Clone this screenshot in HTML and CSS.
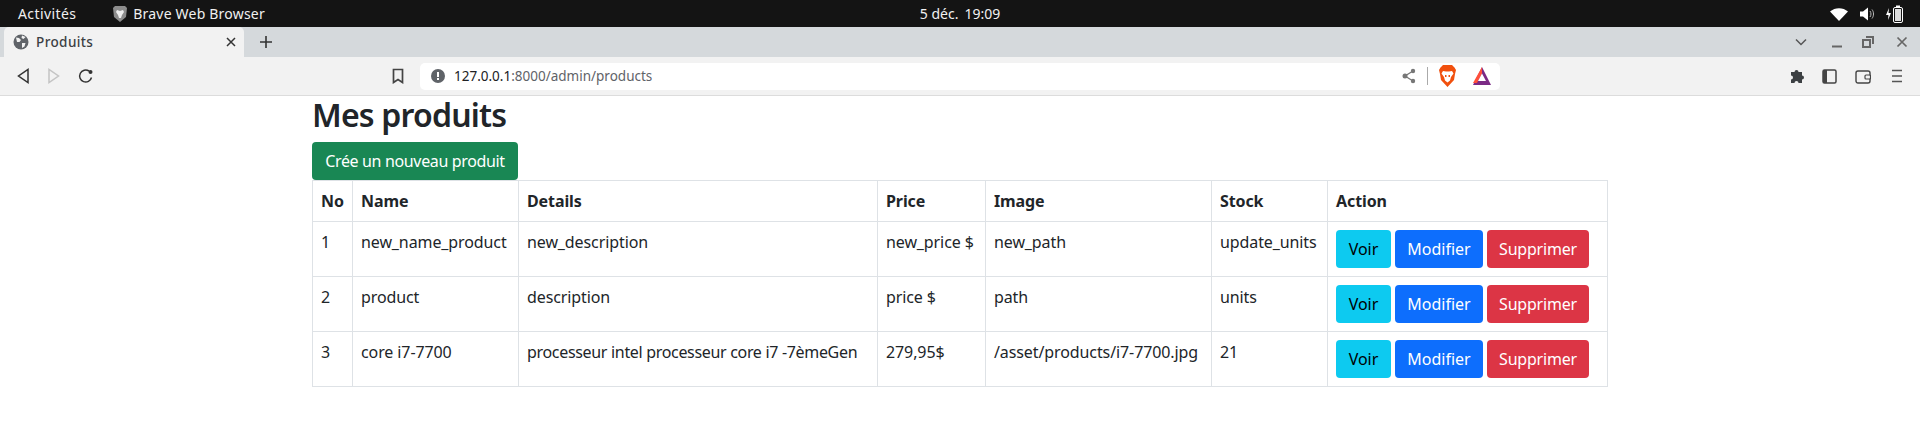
FILE: index.html
```html
<!DOCTYPE html>
<html lang="fr">
<head>
    <meta charset="UTF-8">
    <title>Produits</title>
    <link rel="stylesheet" href="styles.css">
</head>
<body>
    <!-- Desktop top bar -->
    <div class="topbar">
        <div class="topbar-left">
            <span class="activities">Activités</span>
            <svg class="app-icon" width="16" height="18" viewBox="0 0 16 18"><path d="M3 1h10l2 2-1 9-6 5-6-5-1-9z" fill="#8d8d8d"/><path d="M5 5l3 1 3-1 1 2-2 3-1 3H7l-1-3-2-3z" fill="#eee"/></svg>
            <span class="app-name">Brave Web Browser</span>
        </div>
        <div class="topbar-clock"><span>5 déc.</span><span>19:09</span></div>
        <div class="topbar-right">
            <svg width="20" height="16" viewBox="0 0 20 16"><path d="M1 5.500C6 1 14 1 19 5.500L10 15z" fill="#fff"/></svg>
            <svg width="16" height="16" viewBox="0 0 16 16"><path d="M1 5.500h3L9 1.500v13l-5-4H1z" fill="#fff"/><path d="M11 5c1.300 1.800 1.300 4.200 0 6M13 3.500c2 2.600 2 6.400 0 9" fill="none" stroke="#bbb"/></svg>
            <svg width="20" height="18" viewBox="0 0 20 18"><path d="M4 3L1 10h2.500L3 15l3-7H3.500z" fill="#fff"/><rect x="8.500" y="2.500" width="9" height="15" rx="1.500" fill="none" stroke="#fff"/><rect x="11" y="0.500" width="4" height="2" fill="#fff"/><rect x="10" y="4" width="6" height="12" fill="#ddd"/></svg>
        </div>
    </div>

    <!-- Browser tabs -->
    <div class="tabstrip">
        <div class="tab">
            <svg width="16" height="16" viewBox="0 0 16 16"><circle cx="8" cy="8" r="7.500" fill="#5f6368"/><path d="M3 3.500l3 .5 2 2-1.500 2L4 8zM9 1.500l3.500 1.500-2 2L8.500 4zM9 9h3.500l-1 3.500L9 14z" fill="#f2f2f2"/></svg>
            <span class="tab-title">Produits</span>
            <svg class="tab-close" width="10" height="10" viewBox="0 0 10 10"><path d="M1 1l8 8M9 1L1 9" stroke="#333" stroke-width="1.500"/></svg>
        </div>
        <svg class="new-tab" width="14" height="14" viewBox="0 0 14 14"><path d="M7 1v12M1 7h12" stroke="#333" stroke-width="1.600"/></svg>
        <div class="window-buttons">
            <svg width="12" height="8" viewBox="0 0 12 8"><path d="M1 1.500l5 5 5-5" fill="none" stroke="#555" stroke-width="1.500"/></svg>
            <svg class="win-min" width="12" height="12" viewBox="0 0 12 12"><path d="M1 10.500h10" stroke="#666" stroke-width="2"/></svg>
            <svg class="win-restore" width="12" height="12" viewBox="0 0 12 12"><path d="M1 4h7v7H1z" fill="none" stroke="#666" stroke-width="2"/><path d="M4 1h7v7" fill="none" stroke="#666" stroke-width="2"/></svg>
            <svg class="win-close" width="12" height="12" viewBox="0 0 12 12"><path d="M1.500 1.500l9 9M10.500 1.500l-9 9" stroke="#666" stroke-width="1.700"/></svg>
        </div>
    </div>

    <!-- Browser toolbar -->
    <div class="toolbar">
        <svg class="nav-back" width="12" height="16" viewBox="0 0 12 16"><path d="M11 1.500v13L1.500 8z" fill="none" stroke="#333" stroke-width="1.500"/></svg>
        <svg class="nav-forward" width="12" height="16" viewBox="0 0 12 16"><path d="M1 1.500v13L10.500 8z" fill="none" stroke="#c4c4c4" stroke-width="1.500"/></svg>
        <svg class="nav-reload" width="16" height="16" viewBox="0 0 16 16"><path d="M13.500 9.500A6 6 0 1 1 11 3" fill="none" stroke="#333" stroke-width="1.500"/><circle cx="12.500" cy="4" r="2" fill="#333"/></svg>
        <svg class="nav-bookmark" width="12" height="16" viewBox="0 0 12 16"><path d="M1.500 1.500h9v13L6 11.500l-4.500 3z" fill="none" stroke="#444" stroke-width="1.700"/></svg>
        <div class="urlbar">
            <svg width="14" height="14" viewBox="0 0 14 14"><circle cx="7" cy="7" r="7" fill="#5f6368"/><rect x="6" y="3" width="2" height="5" fill="#fff"/><rect x="6" y="9" width="2" height="2" fill="#fff"/></svg>
            <span class="url"><span class="url-host">127.0.0.1</span>:8000/admin/products</span>
            <svg class="url-share" width="14" height="16" viewBox="0 0 14 16"><path d="M11 3L3 8l8 5" fill="none" stroke="#777" stroke-width="1.300"/><circle cx="11" cy="3" r="2.200" fill="#777"/><circle cx="3" cy="8" r="2.500" fill="#777"/><circle cx="11" cy="13" r="2.200" fill="#777"/></svg>
            <span class="url-divider"></span>
            <svg class="url-brave" width="17" height="22" viewBox="0 0 17 22"><path d="M4 0h9l2.500 2.500L17 5l-1 4-1 6-6.500 7L2 15 1 9 0 5l1.500-2.500z" fill="#f1500e"/><path d="M4 6l3 .5h3l3-.5 1.500 2.500-2.500 3.500-1 3.500-2.500 2-2.500-2-1-3.500L2.500 8.500z" fill="#fff"/><path d="M6 10h1.500v2H6zM9.500 10H11v2H9.500z" fill="#f1500e"/></svg>
            <svg class="url-bat" width="18" height="18" viewBox="0 0 18 18"><path d="M9 0l9 18H0z" fill="#7b2a85"/><path d="M9 0L0 16h4L9 6.500z" fill="#ff4f3a"/><path d="M9 6.500l4 7.500H5z" fill="#fff"/></svg>
        </div>
        <svg class="tool-ext" width="15" height="16" viewBox="0 0 15 16"><path d="M1 4h3.500a2 2 0 0 1 4 0H12v3.500a2 2 0 0 1 0 4V15H8.500a2 2 0 0 0-4 0H1v-3.500a2 2 0 0 0 0-4z" fill="#3c4043"/></svg>
        <svg class="tool-side" width="15" height="15" viewBox="0 0 15 15"><rect x="1" y="1" width="13" height="13" rx="1.500" fill="none" stroke="#444" stroke-width="1.500"/><rect x="1" y="1" width="4" height="13" fill="#444"/></svg>
        <svg class="tool-wallet" width="16" height="15" viewBox="0 0 16 15"><rect x="1" y="2" width="14" height="12" rx="2" fill="none" stroke="#444" stroke-width="1.400"/><rect x="10" y="6" width="5.500" height="4" rx="1" fill="#f2f2f2" stroke="#444" stroke-width="1.200"/></svg>
        <svg class="tool-menu" width="12" height="14" viewBox="0 0 12 14"><path d="M1 1.500h10M1 7h10M1 12.500h10" stroke="#555" stroke-width="1.700"/></svg>
    </div>

    <!-- Page content -->
    <div class="container">
        <h2 class="page-title">Mes produits</h2>
        <a class="btn btn-success btn-create" href="#">Crée un nouveau produit</a>
        <table class="product-table">
            <colgroup>
                <col class="col-no"><col class="col-name"><col class="col-details"><col class="col-price">
                <col class="col-image"><col class="col-stock"><col class="col-action">
            </colgroup>
            <thead>
                <tr>
                    <th>No</th><th>Name</th><th>Details</th><th>Price</th><th>Image</th><th>Stock</th><th>Action</th>
                </tr>
            </thead>
            <tbody>
                <tr>
                    <td>1</td><td>new_name_product</td><td>new_description</td><td>new_price $</td><td>new_path</td><td>update_units</td>
                    <td><div class="actions"><a class="btn btn-info" href="#">Voir</a><a class="btn btn-primary" href="#">Modifier</a><a class="btn btn-danger" href="#">Supprimer</a></div></td>
                </tr>
                <tr>
                    <td>2</td><td>product</td><td>description</td><td>price $</td><td>path</td><td>units</td>
                    <td><div class="actions"><a class="btn btn-info" href="#">Voir</a><a class="btn btn-primary" href="#">Modifier</a><a class="btn btn-danger" href="#">Supprimer</a></div></td>
                </tr>
                <tr>
                    <td>3</td><td>core i7-7700</td><td class="cell-long">processeur intel processeur core i7 -7èmeGen</td><td>279,95$</td><td>/asset/products/i7-7700.jpg</td><td>21</td>
                    <td><div class="actions"><a class="btn btn-info" href="#">Voir</a><a class="btn btn-primary" href="#">Modifier</a><a class="btn btn-danger" href="#">Supprimer</a></div></td>
                </tr>
            </tbody>
        </table>
    </div>
</body>
</html>
```

FILE: styles.css
```css
/* Reset */
html, body {
    margin: 0;
    padding: 0;
    background-color: #fff;
    font-family: "Noto Sans", "Open Sans", sans-serif;
    overflow: hidden;
}

svg {
    display: block;
    flex: none;
}

/* Desktop top bar */
.topbar {
    height: 27px;
    background-color: #141414;
    color: #f0f0f0;
    font-size: 14px;
    display: grid;
    grid-template-columns: 1fr auto 1fr;
    align-items: center;
}

.topbar-left {
    display: flex;
    align-items: center;
    padding-left: 18px;
}

.activities {
    margin-right: 36px;
    letter-spacing: 0.4px;
}

.app-icon {
    margin-right: 5px;
}

.app-name {
    letter-spacing: 0.2px;
}

.topbar-clock {
    display: flex;
    gap: 6px;
}

.topbar-right {
    display: flex;
    align-items: center;
    justify-content: flex-end;
    gap: 10px;
    padding-right: 15px;
}

/* Browser tabs */
.tabstrip {
    height: 30px;
    background-color: #d5d9dc;
    display: flex;
    align-items: center;
}

.tab {
    width: 240px;
    height: 30px;
    margin-left: 4px;
    padding: 0 8px 0 9px;
    box-sizing: border-box;
    background-color: #f2f2f2;
    border-radius: 5px 5px 0 0;
    display: flex;
    align-items: center;
    color: #3c4043;
    font-size: 13.5px;
    font-weight: 500;
}

.tab-title {
    margin-left: 7px;
    letter-spacing: 0.4px;
}

.tab-close {
    margin-left: auto;
}

.new-tab {
    margin-left: 15px;
}

.window-buttons {
    margin-left: auto;
    display: flex;
    align-items: center;
    padding-right: 12px;
}

.win-min {
    margin-left: 24px;
}

.win-restore {
    margin-left: 19px;
}

.win-close {
    margin-left: 22px;
}

/* Browser toolbar */
.toolbar {
    height: 38px;
    background-color: #f2f2f2;
    border-bottom: 1px solid #dcdcdc;
    display: flex;
    align-items: center;
}

.nav-back {
    margin-left: 17px;
}

.nav-forward {
    margin-left: 19px;
}

.nav-reload {
    margin-left: 18px;
}

.nav-bookmark {
    margin-left: 298px;
}

.urlbar {
    width: 1080px;
    height: 27px;
    margin-left: 16px;
    padding-left: 11px;
    box-sizing: border-box;
    background-color: #fff;
    border-radius: 5px;
    display: flex;
    align-items: center;
    color: #5f6368;
    font-size: 13.5px;
}

.url {
    margin-left: 9px;
}

.url-host {
    color: #202124;
}

.url-share {
    margin-left: auto;
}

.url-divider {
    width: 1px;
    height: 18px;
    margin-left: 11px;
    background-color: #aaa;
}

.url-brave {
    margin-left: 11px;
}

.url-bat {
    margin-left: 17px;
    margin-right: 9px;
}

.tool-ext {
    margin-left: 290px;
}

.tool-side {
    margin-left: 17px;
}

.tool-wallet {
    margin-left: 18px;
}

.tool-menu {
    margin-left: 20px;
}

/* Page content */
.container {
    width: 1296px;
    margin: 0 auto;
    color: #212529;
    font-size: 16px;
    line-height: 24px;
}

.page-title {
    margin: 0 0 8px;
    font-size: 32px;
    font-weight: 600;
    line-height: 38px;
    letter-spacing: -0.8px;
}

.btn {
    display: inline-block;
    height: 38px;
    padding: 7px 0;
    box-sizing: border-box;
    border-radius: 4px;
    color: #fff;
    font-size: 16px;
    line-height: 24px;
    text-align: center;
    text-decoration: none;
}

.btn-success {
    background-color: #198754;
}

.btn-create {
    width: 206px;
    vertical-align: top;
    letter-spacing: -0.35px;
}

.btn-info {
    width: 55px;
    background-color: #0dcaf0;
    color: #000;
}

.btn-primary {
    width: 88px;
    background-color: #0d6efd;
}

.btn-danger {
    width: 102px;
    background-color: #dc3545;
    letter-spacing: -0.2px;
}

/* Products table */
.product-table {
    width: 1296px;
    border-collapse: collapse;
    table-layout: fixed;
}

.product-table th,
.product-table td {
    padding: 8px;
    border: 1px solid #dee2e6;
    text-align: left;
    vertical-align: top;
    white-space: nowrap;
    letter-spacing: -0.1px;
}

.product-table th {
    font-weight: 700;
}

.product-table .cell-long {
    letter-spacing: -0.32px;
}

.actions {
    display: flex;
    gap: 4px;
    letter-spacing: normal;
}

.col-no { width: 40px; }
.col-name { width: 166px; }
.col-details { width: 359px; }
.col-price { width: 108px; }
.col-image { width: 226px; }
.col-stock { width: 116px; }
```
